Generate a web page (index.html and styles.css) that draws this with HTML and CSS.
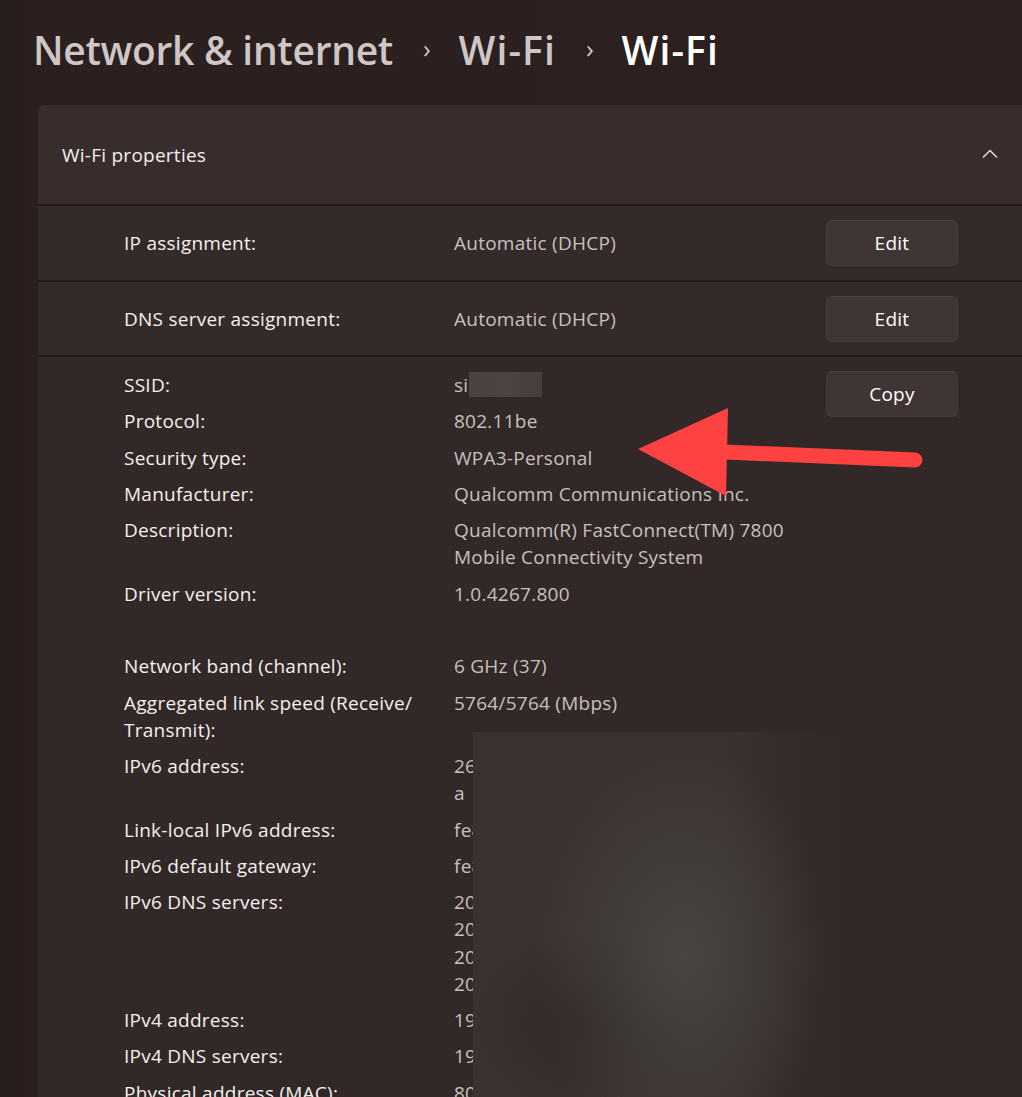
FILE: index.html
```html
<!DOCTYPE html>
<html lang="en">
<head>
<meta charset="utf-8">
<title>Wi-Fi properties</title>
<link rel="stylesheet" href="styles.css">
</head>
<body>
<div class="page">
  <h1 class="crumbs">
    <span class="crumb">Network &amp; internet</span>
    <span class="sep">›</span>
    <span class="crumb wide">Wi-Fi</span>
    <span class="sep">›</span>
    <span class="crumb wide current">Wi-Fi</span>
  </h1>

  <section class="card">
    <div class="card-head">
      <span class="card-title">Wi-Fi properties</span>
      <svg class="chev" width="16" height="10" viewBox="0 0 16 10"><polyline points="1,8.5 8,1.5 15,8.5" fill="none" stroke="#e8e2e1" stroke-width="1.4"/></svg>
    </div>

    <div class="setting">
      <span class="label">IP assignment:</span>
      <span class="value">Automatic (DHCP)</span>
      <button class="btn">Edit</button>
    </div>
    <div class="setting">
      <span class="label">DNS server assignment:</span>
      <span class="value">Automatic (DHCP)</span>
      <button class="btn">Edit</button>
    </div>

    <div class="details">
      <div class="list">
        <div class="row"><span class="label">SSID:</span><span class="value">si<span class="redact"></span></span></div>
        <div class="row"><span class="label">Protocol:</span><span class="value">802.11be</span></div>
        <div class="row"><span class="label">Security type:</span><span class="value">WPA3-Personal</span></div>
        <div class="row"><span class="label">Manufacturer:</span><span class="value">Qualcomm Communications Inc.</span></div>
        <div class="row"><span class="label">Description:</span><span class="value">Qualcomm(R) FastConnect(TM) 7800<br>Mobile Connectivity System</span></div>
        <div class="row"><span class="label">Driver version:</span><span class="value">1.0.4267.800</span></div>
        <div class="row empty"></div>
        <div class="row"><span class="label">Network band (channel):</span><span class="value">6 GHz (37)</span></div>
        <div class="row"><span class="label">Aggregated link speed (Receive/<br>Transmit):</span><span class="value">5764/5764 (Mbps)</span></div>
        <div class="row"><span class="label">IPv6 address:</span><span class="value">260<br>a</span></div>
        <div class="row"><span class="label">Link-local IPv6 address:</span><span class="value">fe8</span></div>
        <div class="row"><span class="label">IPv6 default gateway:</span><span class="value">fe8</span></div>
        <div class="row"><span class="label">IPv6 DNS servers:</span><span class="value">200<br>200<br>200<br>200</span></div>
        <div class="row"><span class="label">IPv4 address:</span><span class="value">192</span></div>
        <div class="row"><span class="label">IPv4 DNS servers:</span><span class="value">192</span></div>
        <div class="row"><span class="label">Physical address (MAC):</span><span class="value">80:</span></div>
      </div>
      <div class="side">
        <button class="btn">Copy</button>
      </div>
    </div>
  </section>

  <div class="blur"></div>

  <svg class="arrow" width="320" height="110" viewBox="0 0 320 110">
    <line x1="95" y1="52" x2="285" y2="60" stroke="#fe4242" stroke-width="15" stroke-linecap="round"/>
    <polygon points="8,49 98,8 96,96" fill="#fe4242"/>
  </svg>
</div>
</body>
</html>
```

FILE: styles.css
```css
html, body {
  margin: 0;
  padding: 0;
}
body {
  background: #2b1f1f;
  font-family: "Open Sans", "Noto Sans", "Liberation Sans", sans-serif;
  color: #f2eeed;
  overflow: hidden;
  width: 1022px;
  height: 1097px;
}
.page {
  position: relative;
  width: 1022px;
  height: 1097px;
  overflow: hidden;
  background: linear-gradient(to right, #281d1d 0, #2b1f1f 40px, #2c2020 100%);
}
.crumbs {
  margin: 0;
  padding: 26px 0 0 33px;
  height: 48px;
  margin-bottom: 31px;
  display: flex;
  align-items: center;
  font-size: 39px;
  font-weight: 600;
  line-height: 48px;
  letter-spacing: -0.3px;
  color: #cec7c6;
  white-space: nowrap;
}
.crumb.wide {
  letter-spacing: 1.1px;
}
.sep {
  font-size: 26px;
  font-weight: 400;
  margin: 0 28px 0 30px;
  color: #cec7c6;
  position: relative;
  top: -2px;
}
.crumb.current {
  color: #ffffff;
}
.card {
  margin-left: 38px;
  width: 1020px;
  display: flex;
  flex-direction: column;
  gap: 2px;
  background: #241a1a;
  border-radius: 6px 0 0 0;
  overflow: hidden;
  letter-spacing: 0.25px;
}
.card-head {
  height: 99px;
  background: #382d2c;
  display: flex;
  align-items: center;
  justify-content: space-between;
  padding: 0 60px 0 24px;
  font-size: 19px;
  color: #f4f0ef;
}
.chev {
  margin-top: -2px;
}
.setting {
  height: 74px;
  background: #342a29;
  display: grid;
  grid-template-columns: 330px 372px 132px;
  align-items: center;
  padding-left: 86px;
  font-size: 19px;
}
.setting:nth-of-type(3) {
  height: 73px;
}
.label {
  color: #f4f0ef;
}
.value {
  color: #c7c0bf;
}
.btn {
  width: 132px;
  height: 46px;
  background: #3f3534;
  border: 1px solid #453b3a;
  border-top-color: #4a403f;
  border-radius: 6px;
  color: #ffffff;
  font-family: inherit;
  font-size: 19px;
  letter-spacing: 0.25px;
  padding: 0;
}
.details {
  background: #312827;
  display: flex;
  padding: 15px 0 0 86px;
  min-height: 760px;
  font-size: 19px;
  line-height: 27.2px;
}
.list {
  width: 702px;
  display: flex;
  flex-direction: column;
  gap: 9.1px;
}
.row {
  display: flex;
}
.row.empty {
  height: 27.2px;
}
.row .label {
  width: 330px;
  flex: none;
}
.side {
  margin-top: -1px;
}
.redact {
  display: inline-block;
  width: 73px;
  height: 25px;
  vertical-align: -5px;
  background: linear-gradient(to right, #4a4241, #4b4443 50%, #463e3d);
  margin-left: 1px;
}
.blur {
  position: absolute;
  left: 473px;
  top: 732px;
  width: 560px;
  height: 365px;
  background:
    radial-gradient(ellipse 150px 210px at 210px 222px, rgba(74,70,66,0.95), rgba(74,70,66,0) 100%),
    radial-gradient(ellipse 110px 90px at 110px 290px, rgba(44,36,34,0.7), rgba(44,36,34,0) 100%),
    linear-gradient(to right, #3a3230 0, #3a3230 45%, rgba(51,42,40,0.6) 62%, rgba(49,40,39,0) 80%);
}
.arrow {
  position: absolute;
  left: 630px;
  top: 400px;
}
```
